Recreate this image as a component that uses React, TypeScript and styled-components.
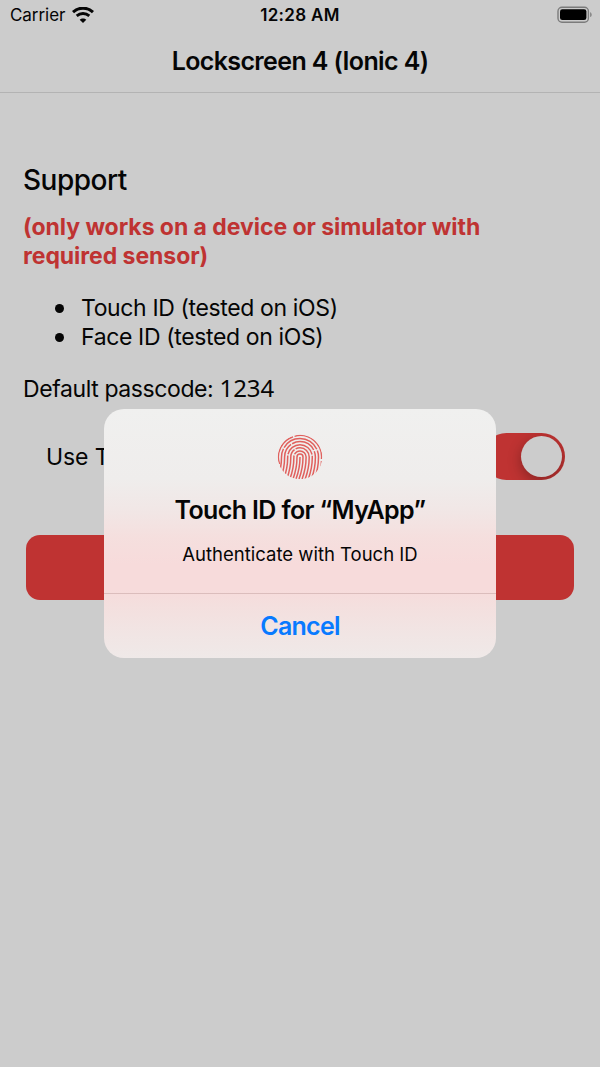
import React from "react";
import styled, { createGlobalStyle } from "styled-components";

const GlobalStyle = createGlobalStyle`
  *, *::before, *::after { box-sizing: border-box; }
  body { margin: 0; background: #ccc; }
`;

const Screen = styled.div`
  position: relative;
  width: 600px;
  height: 1067px;
  overflow: hidden;
  display: flex;
  flex-direction: column;
  background: #ccc;
  color: #050505;
  font-family: Inter, "Liberation Sans", sans-serif;
`;

const StatusBar = styled.div`
  display: grid;
  grid-template-columns: 1fr auto 1fr;
  align-items: center;
  height: 30px;
  padding: 0 7px 0 10px;
  font-size: 17px;
  line-height: 30px;
`;

const Carrier = styled.div`
  display: flex;
  align-items: center;
  gap: 7px;
  letter-spacing: -0.05px;
`;

const Clock = styled.div`
  margin-right: 3px;
  font-weight: 600;
  letter-spacing: 0.33px;
`;

const BatterySlot = styled.div`
  display: flex;
  justify-content: flex-end;
`;

const Header = styled.header`
  height: 63px;
  border-bottom: 1px solid #b3b3b3;
  text-align: center;
  font-size: 25px;
  font-weight: 600;
  line-height: 62px;
  letter-spacing: -0.62px;
`;

const Content = styled.main`
  display: flex;
  flex-direction: column;
  padding: 69px 24px 0 23px;
  font-size: 23px;
  line-height: 29px;
`;

const Heading = styled.h2`
  margin: 0;
  font-size: 28px;
  font-weight: 500;
  line-height: 36px;
  letter-spacing: -0.5px;
`;

const Warning = styled.p`
  margin: 15px 0 0;
  color: #bf3332;
  font-size: 23px;
  font-weight: 700;
  line-height: 29px;
  letter-spacing: -0.05px;
`;

const FeatureList = styled.ul`
  margin: 23px 0 0;
  padding: 0;
  list-style: none;
`;

const Feature = styled.li`
  display: flex;
  align-items: center;
  gap: 17px;
  padding-left: 32px;
  letter-spacing: -0.37px;

  &::before {
    content: "";
    width: 9px;
    height: 9px;
    border-radius: 50%;
    background: #050505;
  }
`;

const Passcode = styled.p`
  margin: 23px 0 0;
  letter-spacing: -0.4px;
`;

const Code = styled.code`
  font-family: "Noto Sans", sans-serif;
  font-size: 24px;
  line-height: 20px;
  letter-spacing: 0;
`;

const ToggleRow = styled.div`
  display: flex;
  align-items: center;
  justify-content: space-between;
  height: 70px;
  margin-top: 17px;
  padding: 1px 11px 0 23px;
`;

const ToggleLabel = styled.span`
  padding-top: 2px;
  letter-spacing: -0.1px;
`;

const Switch = styled.div`
  display: flex;
  justify-content: flex-end;
  width: 82px;
  height: 47px;
  padding: 3px;
  border-radius: 24px;
  background: #bf3332;
  overflow: hidden;
`;

const Knob = styled.div`
  width: 41px;
  height: 41px;
  border-radius: 50%;
  background: #ccc;
  box-shadow: 0 4px 14px rgba(0, 0, 0, 0.3);
`;

const PrimaryButton = styled.div`
  height: 65px;
  margin: 44px 2px 0 3px;
  border-radius: 14px;
  background: #bf3332;
`;

const Dialog = styled.section`
  position: absolute;
  top: 409px;
  left: 104px;
  width: 392px;
  height: 249px;
  display: flex;
  flex-direction: column;
  align-items: center;
  border-radius: 20px;
  overflow: hidden;
  text-align: center;
  background: linear-gradient(
    #f0f0ef 0,
    #efedec 70px,
    #f1e7e6 100px,
    #f5dfde 128px,
    #f7dbdb 155px,
    #f7dbdb 180px,
    #f4dfde 195px,
    #f1e5e4 225px,
    #efe9e8 249px
  );
`;

const DialogBody = styled.div`
  display: flex;
  flex-direction: column;
  align-items: center;
  width: 100%;
  height: 185px;
  padding-top: 25px;
  border-bottom: 1px solid #dbbdbc;
`;

const DialogTitle = styled.h1`
  margin: 13px 0 0;
  font-size: 25px;
  font-weight: 600;
  line-height: 34px;
  letter-spacing: -0.63px;
`;

const DialogText = styled.p`
  margin: 15px 0 0;
  font-size: 18.5px;
  line-height: 24px;
`;

const CancelButton = styled.button`
  flex: 1;
  width: 100%;
  padding: 0;
  border: 0;
  background: none;
  color: #087aff;
  font-family: inherit;
  font-size: 25px;
  font-weight: 600;
  letter-spacing: -0.75px;
`;

const Wifi = () => (
  <svg width="22" height="17" viewBox="0 0 22 17" fill="none" stroke="#050505">
    <path d="M1 5.1C6.7 -0.1 15.3 -0.1 21 5.1" strokeWidth="3.1" />
    <path d="M4.7 8.9C8.3 5.7 13.7 5.7 17.3 8.9" strokeWidth="2.8" />
    <path d="M11 16L7.7 12.8C9.4 11 12.6 11 14.3 12.8Z" fill="#050505" stroke="none" />
  </svg>
);

const Battery = () => (
  <svg width="36" height="18" viewBox="0 0 36 18">
    <rect x="1" y="1.2" width="30.4" height="15" rx="4" fill="none" stroke="#7b7b7b" strokeWidth="1.4" />
    <rect x="3" y="3.3" width="26.4" height="10.8" rx="2.3" fill="#000" />
    <path d="M33.2 6.3c1.9.6 1.9 4.2 0 4.8z" fill="#7b7b7b" />
  </svg>
);

const RIDGES = [
  { r: 3, dash: "60 0" },
  { r: 6.1, dash: "24 1.3 60" },
  { r: 9.2, dash: "31 1.3 60" },
  { r: 12.3, dash: "24 1.3 33 1.3 30" },
  { r: 15.4, dash: "37 1.3 25 1.3 40" },
  { r: 18.5, dash: "31 1.3 40 1.3 40" },
];

const Fingerprint = () => (
  <svg width="46" height="46" viewBox="-23 -23 46 46" fill="none" stroke="#e0605d" strokeWidth="1.5">
    <defs>
      <clipPath id="print">
        <circle r="22.2" />
      </clipPath>
    </defs>
    <g clipPath="url(#print)">
      <path d="M-20.5 7A21.5 21.5 0 0 1-7 -20.3M-5.5 -20.8A21.5 21.5 0 0 1 21.5 2" />
      {RIDGES.map(({ r, dash }) => (
        <path
          key={r}
          strokeDasharray={dash}
          d={`M${-r - 4} 22C${-r - 1} 14 ${-r} 8 ${-r} 0A${r} ${r} 0 0 1 ${r} 0C${r} 8 ${r - 1} 14 ${r - 4} 22`}
        />
      ))}
      <path d="M0 0C0 8 -1 14 -4 22M21.5 4C21.5 10 20 14 18 20" />
    </g>
  </svg>
);

export default function App() {
  return (
    <>
      <GlobalStyle />
      <Screen>
        <StatusBar>
          <Carrier>
            <span>Carrier</span>
            <Wifi />
          </Carrier>
          <Clock>12:28 AM</Clock>
          <BatterySlot>
            <Battery />
          </BatterySlot>
        </StatusBar>
        <Header>Lockscreen 4 (Ionic 4)</Header>
        <Content>
          <Heading>Support</Heading>
          <Warning>
            (only works on a device or simulator with
            <br />
            required sensor)
          </Warning>
          <FeatureList>
            <Feature>Touch ID (tested on iOS)</Feature>
            <Feature>Face ID (tested on iOS)</Feature>
          </FeatureList>
          <Passcode>
            Default passcode: <Code>1234</Code>
          </Passcode>
          <ToggleRow>
            <ToggleLabel>Use T</ToggleLabel>
            <Switch>
              <Knob />
            </Switch>
          </ToggleRow>
          <PrimaryButton />
        </Content>
        <Dialog role="dialog">
          <DialogBody>
            <Fingerprint />
            <DialogTitle>Touch ID for “MyApp”</DialogTitle>
            <DialogText>Authenticate with Touch ID</DialogText>
          </DialogBody>
          <CancelButton>Cancel</CancelButton>
        </Dialog>
      </Screen>
    </>
  );
}
